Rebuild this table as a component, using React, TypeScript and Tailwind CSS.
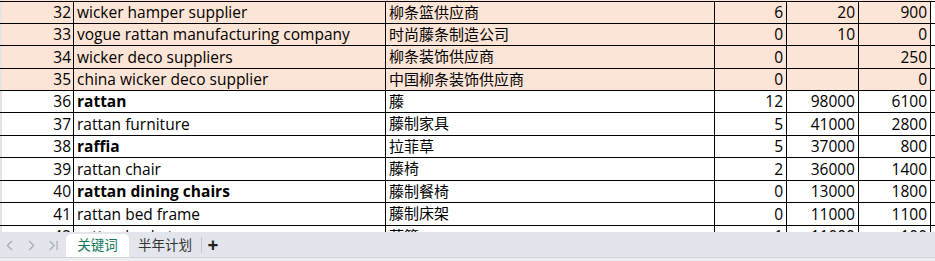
import { ChevronLast, ChevronLeft, ChevronRight } from 'lucide-react'

type Row = {
  n: number
  en: string
  zh: string
  a: string
  b: string
  c: string
  bold?: boolean
  peach?: boolean
  h: string
}

const rows: Row[] = [
  { n: 32, en: 'wicker hamper supplier', zh: '柳条篮供应商', a: '6', b: '20', c: '900', peach: true, h: 'h-[22px]' },
  { n: 33, en: 'vogue rattan manufacturing company', zh: '时尚藤条制造公司', a: '0', b: '10', c: '0', peach: true, h: 'h-[22px]' },
  { n: 34, en: 'wicker deco suppliers', zh: '柳条装饰供应商', a: '0', b: '', c: '250', peach: true, h: 'h-[23px]' },
  { n: 35, en: 'china wicker deco supplier', zh: '中国柳条装饰供应商', a: '0', b: '', c: '0', peach: true, h: 'h-[22px]' },
  { n: 36, en: 'rattan', zh: '藤', a: '12', b: '98000', c: '6100', bold: true, h: 'h-[22px]' },
  { n: 37, en: 'rattan furniture', zh: '藤制家具', a: '5', b: '41000', c: '2800', h: 'h-[23px]' },
  { n: 38, en: 'raffia', zh: '拉菲草', a: '5', b: '37000', c: '800', bold: true, h: 'h-[22px]' },
  { n: 39, en: 'rattan chair', zh: '藤椅', a: '2', b: '36000', c: '1400', h: 'h-[23px]' },
  { n: 40, en: 'rattan dining chairs', zh: '藤制餐椅', a: '0', b: '13000', c: '1800', bold: true, h: 'h-[22px]' },
  { n: 41, en: 'rattan bed frame', zh: '藤制床架', a: '0', b: '11000', c: '1100', h: 'h-[23px]' },
  { n: 42, en: 'rattan basket', zh: '藤篮', a: '1', b: '11000', c: '100', h: 'h-[22px]' },
]

const font = { fontFamily: '"Open Sans", "Noto Sans CJK SC", sans-serif' }

function SheetRow({ r }: { r: Row }) {
  const bg = r.peach ? 'bg-[#fce4d6]' : 'bg-white'
  const cell = `flex items-center border-r border-black ${bg}`
  return (
    <div className={`flex ${r.h} border-t border-black`}>
      <div className="w-[2px] shrink-0 bg-[#e4e4e4]" />
      <div className={`${cell} w-[72px] shrink-0 justify-end pr-[2px] pt-[1px]`}>{r.n}</div>
      <div className={`${cell} w-[312px] shrink-0 pl-[3px] pt-[1px] ${r.bold ? 'font-bold' : ''}`}>{r.en}</div>
      <div className={`${cell} w-[329px] shrink-0 pb-[1px] pl-[3px] text-[15px]`}>{r.zh}</div>
      <div className={`${cell} w-[72px] shrink-0 justify-end pr-[3px] pt-[1px]`}>{r.a}</div>
      <div className={`${cell} w-[72px] shrink-0 justify-end pr-[3px] pt-[1px]`}>{r.b}</div>
      <div className={`${cell} w-[72px] shrink-0 justify-end pr-[3px] pt-[1px]`}>{r.c}</div>
      <div className="flex-1 bg-white" />
    </div>
  )
}

export default function App() {
  return (
    <div className="flex h-[261px] w-[935px] flex-col overflow-hidden bg-white text-[15.5px] text-black" style={font}>
      <div className="relative h-[232px] shrink-0 overflow-hidden leading-none">
        <div className="flex h-px">
          <div className="w-[2px] bg-[#e4e4e4]" />
          <div className="w-[929px] bg-[#fce4d6]" />
        </div>
        {rows.map((r) => (
          <SheetRow key={r.n} r={r} />
        ))}
      </div>
      <div className="flex h-[29px] shrink-0 flex-col bg-[#e2e5ec]">
        <div className="flex h-[25px] items-end">
          <div className="flex h-[23px] w-[66px] items-center gap-[5px] pl-[1px] text-[#a5a8af]">
            <ChevronLeft size={17} strokeWidth={1.5} />
            <ChevronRight size={17} strokeWidth={1.5} />
            <ChevronLast size={17} strokeWidth={1.5} />
          </div>
          <div className="flex h-[23px] w-[63px] items-center justify-center rounded-t-[5px] bg-white text-[13.5px] text-[#13795b]">
            关键词
          </div>
          <div className="flex h-[23px] w-[72px] items-center justify-center text-[13.5px] text-[#333]">
            半年计划
          </div>
          <div className="mb-[4px] h-[16px] w-px bg-[#c4c7ce]" />
          <div className="flex h-[23px] w-[22px] items-center justify-center text-[19px] font-bold leading-none text-[#222]">
            +
          </div>
        </div>
        <div className="h-px bg-[#cfd2d9]" />
        <div className="flex-1 bg-[#eceef2]" />
      </div>
    </div>
  )
}
